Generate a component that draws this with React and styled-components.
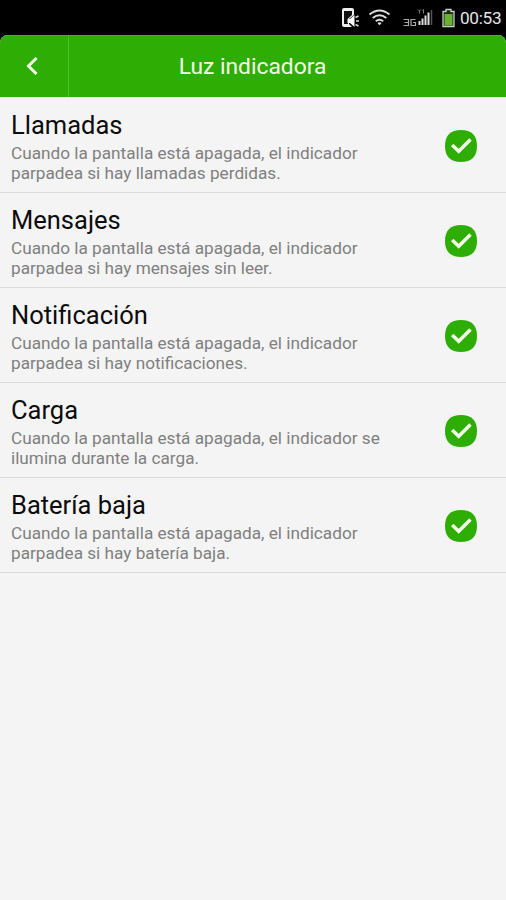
import styled, { createGlobalStyle } from "styled-components";

const GlobalStyle = createGlobalStyle`
  * {
    box-sizing: border-box;
  }
  body {
    margin: 0;
    background: #000;
    font-family: Roboto, "Liberation Sans", sans-serif;
  }
`;

const Screen = styled.div`
  width: 506px;
  height: 900px;
  display: flex;
  flex-direction: column;
  overflow: hidden;
  background: #000;
`;

const StatusBar = styled.div`
  height: 35px;
  flex: none;
  display: flex;
  align-items: center;
  justify-content: flex-end;
  padding-right: 4px;
  svg {
    display: block;
    flex: none;
  }
`;

const Clock = styled.span`
  width: 42px;
  margin-left: 4px;
  padding-top: 2px;
  color: #e6e6e6;
  font-size: 17.2px;
  line-height: 33px;
  letter-spacing: -0.3px;
  white-space: nowrap;
`;

const Panel = styled.div`
  flex: 1;
  display: flex;
  flex-direction: column;
  overflow: hidden;
  border-radius: 8px 8px 0 0;
  background: #f4f4f4;
`;

const Header = styled.header`
  height: 62px;
  flex: none;
  display: flex;
  background: #2eae05;
  border-top: 1px solid #43b51f;
`;

const BackButton = styled.button`
  width: 69px;
  margin: 0;
  padding: 0 4px 1px 0;
  border: 0;
  border-right: 1px solid #50bb2e;
  display: flex;
  align-items: center;
  justify-content: center;
  background: none;
`;

const HeaderTitle = styled.h1`
  flex: 1;
  margin: 0;
  padding-right: 70px;
  color: #f3fbe9;
  font-size: 22.8px;
  font-weight: 400;
  line-height: 62px;
  text-align: center;
`;

const List = styled.ul`
  margin: 0;
  padding: 1px 0 0;
  list-style: none;
`;

const Row = styled.li`
  height: 95px;
  display: flex;
  align-items: center;
  justify-content: space-between;
  padding: 2px 29px 0 11px;
  border-bottom: 1px solid #d9d9d9;
`;

const RowTitle = styled.h2`
  margin: 0 0 3px;
  color: #0c0c0c;
  font-size: 25.5px;
  font-weight: 400;
  line-height: 32px;
`;

const RowText = styled.p`
  margin: 0;
  color: #808080;
  font-size: 17.2px;
  line-height: 19.7px;
  white-space: pre-line;
`;

const options = [
  {
    title: "Llamadas",
    text: "Cuando la pantalla está apagada, el indicador\nparpadea si hay llamadas perdidas.",
  },
  {
    title: "Mensajes",
    text: "Cuando la pantalla está apagada, el indicador\nparpadea si hay mensajes sin leer.",
  },
  {
    title: "Notificación",
    text: "Cuando la pantalla está apagada, el indicador\nparpadea si hay notificaciones.",
  },
  {
    title: "Carga",
    text: "Cuando la pantalla está apagada, el indicador se\nilumina durante la carga.",
  },
  {
    title: "Batería baja",
    text: "Cuando la pantalla está apagada, el indicador\nparpadea si hay batería baja.",
  },
];

const Check = () => (
  <svg width="32" height="32" viewBox="0 0 32 32">
    <path
      d="M16 0C26.500 0 32 5.500 32 16S26.500 32 16 32 0 26.500 0 16 5.500 0 16 0Z"
      fill="#2eae05"
    />
    <path
      d="M7.200 15L13.700 21.200L25.500 9.600"
      fill="none"
      stroke="#f3fbe9"
      strokeWidth="3.5"
    />
  </svg>
);

// phone with speaker, wifi, 3G signal and battery
const StatusIcons = () => (
  <svg width="116" height="35" viewBox="340 0 116 35">
    <path
      d="M344 8h8a2 2 0 0 1 2 2v5l-5 4v5l3 3h-8a2 2 0 0 1-2-2v-15a2 2 0 0 1 2-2Z"
      fill="#eee"
    />
    <path d="M344 11h8v4l-4 3.500v5.500h-4Z" fill="#111" />
    <path d="M347.500 19h2.500l4.500-4v12l-4.500-4h-2.500Z" fill="#fff" />
    <path
      d="M355.500 17.500l3-1.500M356 21h3M355.500 24.500l3 1.500"
      stroke="#ddd"
      strokeWidth="1.4"
    />
    <g fill="none" stroke="#ddd" strokeWidth="2">
      <path d="M369.500 14.500Q379.500 6.500 389.500 14.500" />
      <path d="M372.700 18Q379.500 12.500 386.300 18" />
      <path d="M375.800 21.200Q379.500 18.200 383.200 21.200" />
    </g>
    <path d="M377.300 23Q379.500 21.300 381.700 23L379.500 25.300Z" fill="#ddd" />
    <path
      d="M403.500 19.500h5v6h-5M404.500 22.500h4M415.500 19.500h-4.500v6h4.500v-3h-2.500"
      fill="none"
      stroke="#aaa"
      strokeWidth="1.2"
    />
    <path
      d="M418 9.500l1.500 1.500 1.500-1.500M419.500 11v2.500M423.500 13.500v-4l-1 1"
      fill="none"
      stroke="#999"
      strokeWidth="0.8"
    />
    <path
      d="M419.500 21v4M422.500 18.500v6.500M425.500 15.500v9.500M428.500 12.500v12.500"
      stroke="#ddd"
      strokeWidth="2"
    />
    <path d="M431.500 10v15" stroke="#555" strokeWidth="1.500" />
    <path
      d="M446 9.500h5v2h3v15h-11v-15h3Z"
      fill="#182c0d"
      stroke="#ccc"
      strokeWidth="1.300"
    />
    <rect x="444.500" y="14" width="8" height="11.500" fill="#69ae35" />
  </svg>
);

const App = () => {
  return (
    <>
      <GlobalStyle />
      <Screen>
        <StatusBar>
          <StatusIcons />
          <Clock>00:53</Clock>
        </StatusBar>
        <Panel>
          <Header>
            <BackButton aria-label="Atrás">
              <svg width="12" height="20" viewBox="0 0 12 20">
                <path
                  d="M10.500 2L2.500 10L10.500 18"
                  fill="none"
                  stroke="#f3fbe9"
                  strokeWidth="3"
                />
              </svg>
            </BackButton>
            <HeaderTitle>Luz indicadora</HeaderTitle>
          </Header>
          <List>
            {options.map(({ title, text }) => (
              <Row key={title}>
                <div>
                  <RowTitle>{title}</RowTitle>
                  <RowText>{text}</RowText>
                </div>
                <Check />
              </Row>
            ))}
          </List>
        </Panel>
      </Screen>
    </>
  );
};

export default App;
